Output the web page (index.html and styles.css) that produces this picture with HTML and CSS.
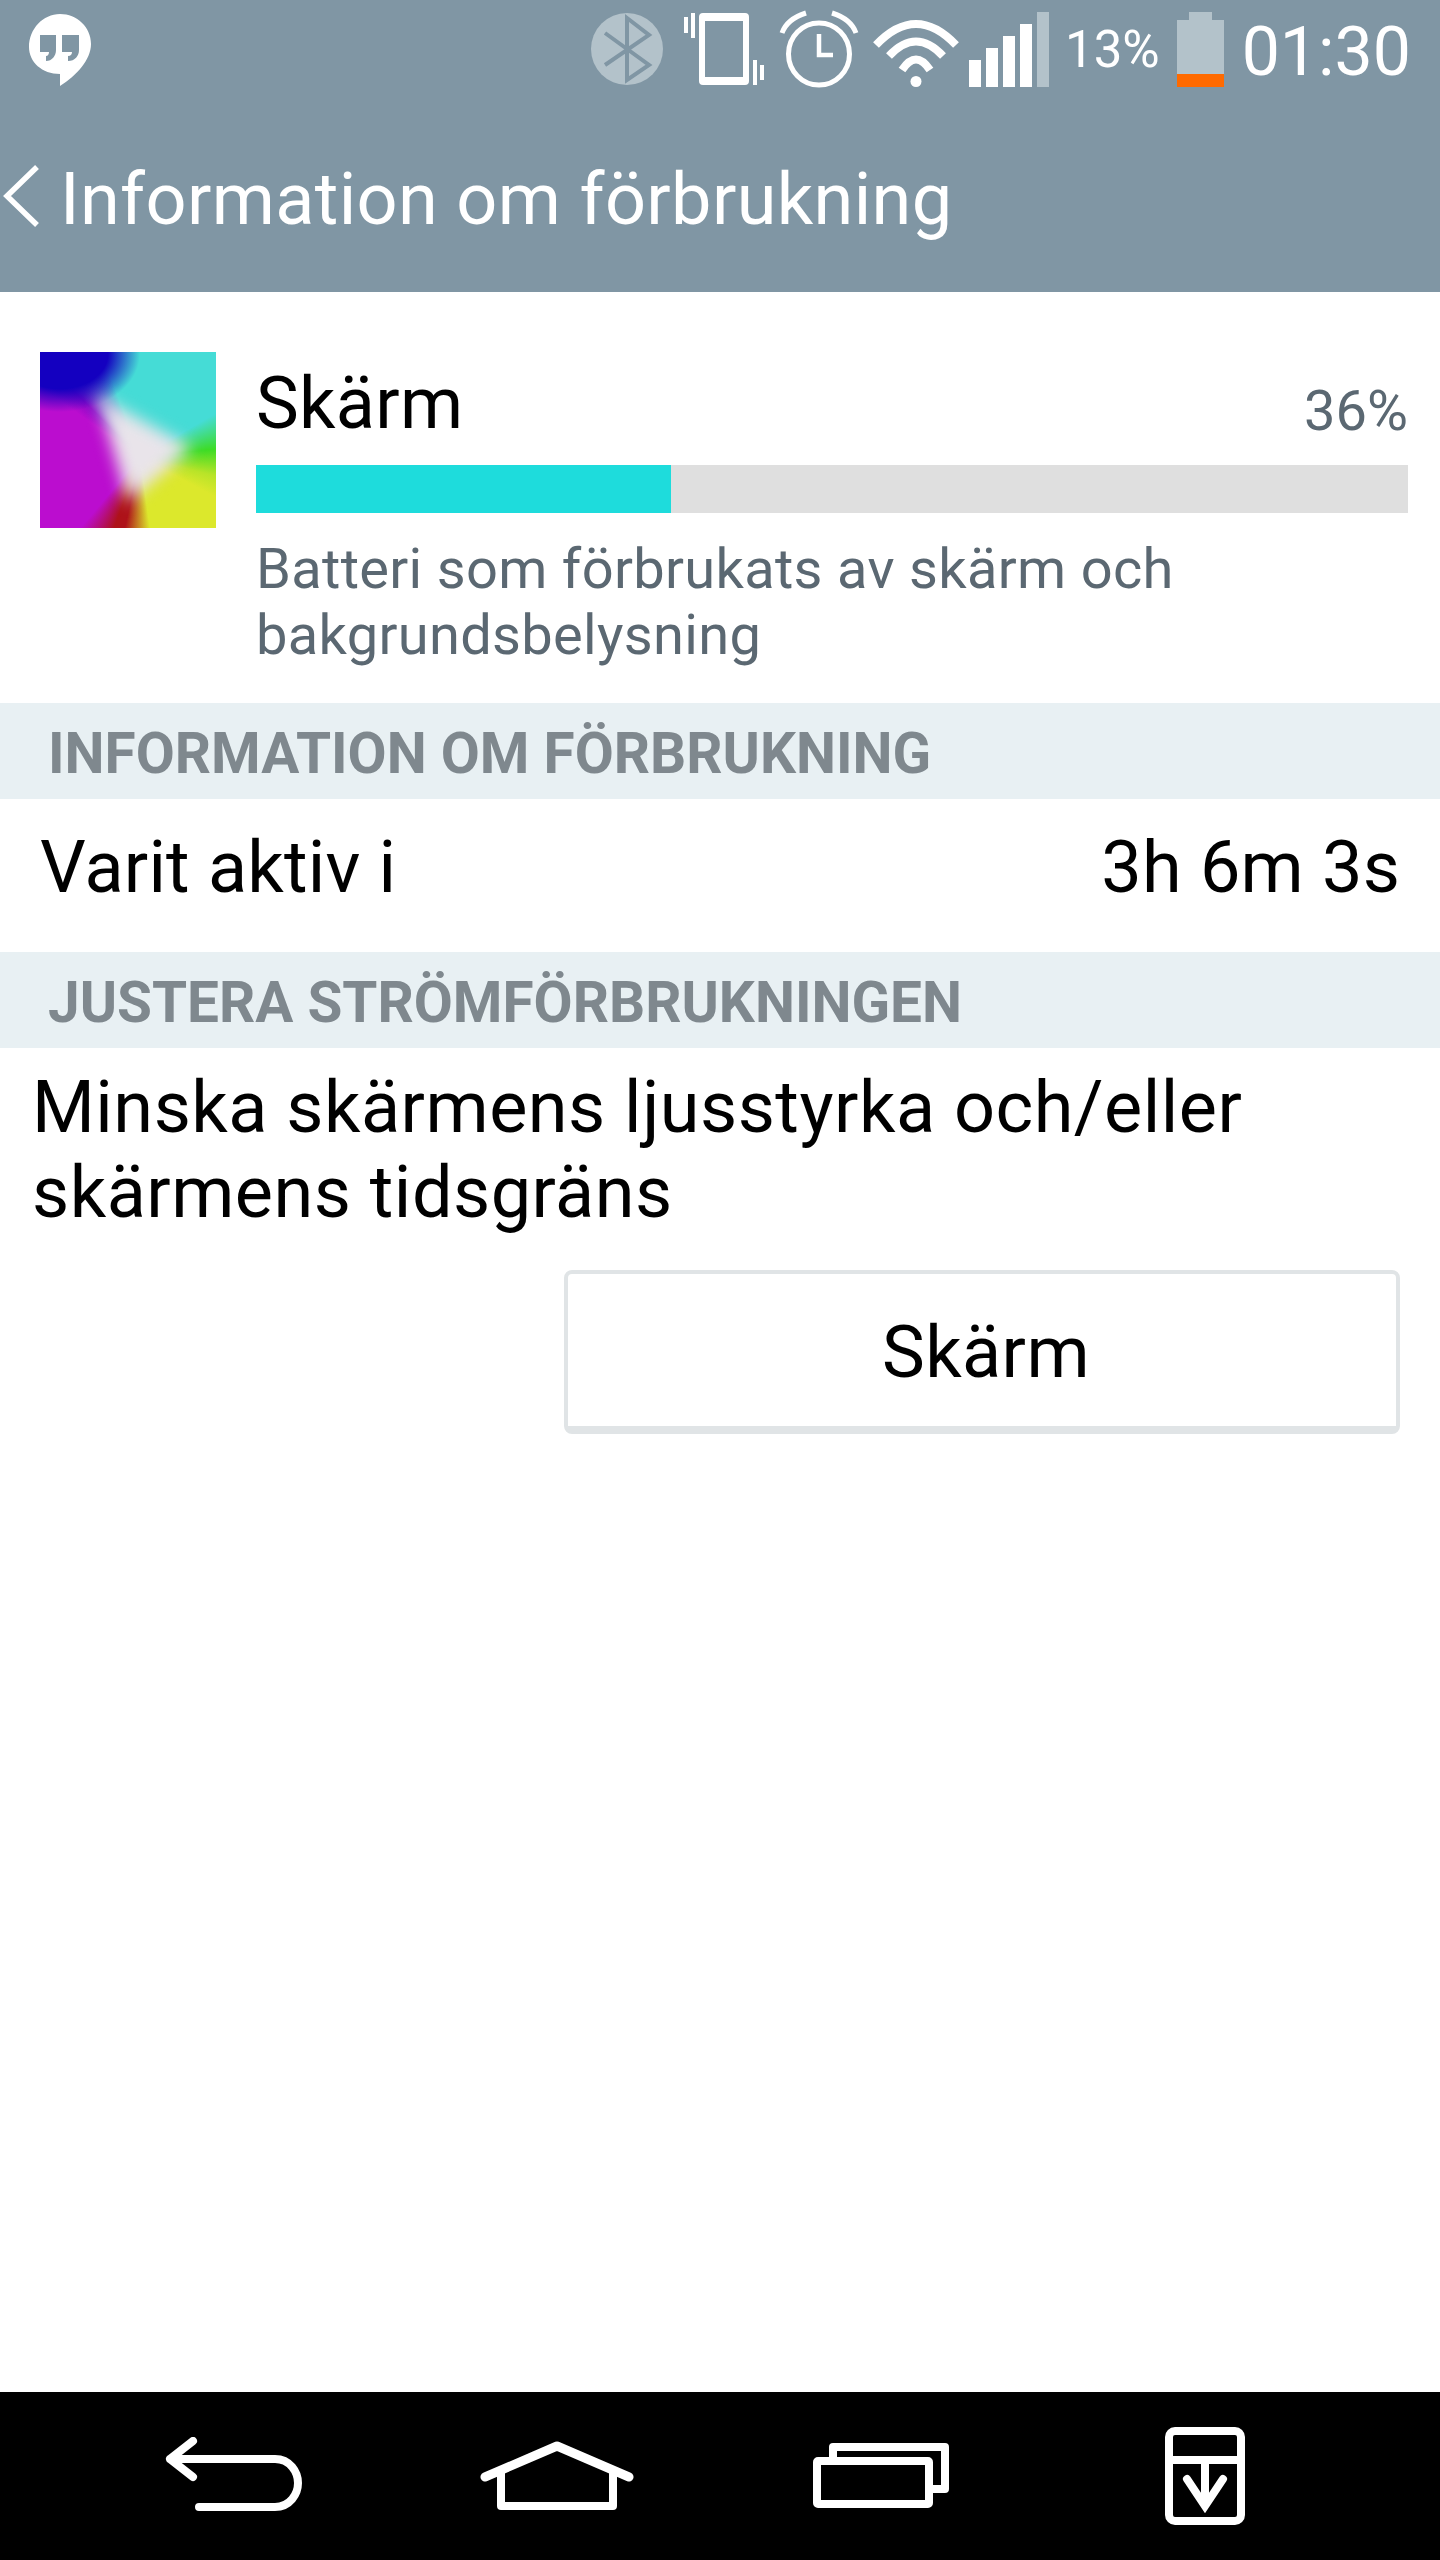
FILE: index.html
```html
<!DOCTYPE html>
<html lang="sv">
<head>
<meta charset="utf-8">
<title>Information om förbrukning</title>
<link rel="stylesheet" href="styles.css">
</head>
<body>
<div class="page">
  <header class="topbar">
    <div class="status">
      <svg class="ic" width="62" height="100" viewBox="29 0 62 100"><path class="w" d="M60 14C43 14 29 29 29 47C29 62 42 74 60 74V86C76 76 91 60 91 44C91 27 77 14 60 14Z"/><path class="bg" d="M40 35H56V50C56 56 52 61 46 61V56C48 56 49 54 49 52H40ZM62 35H79V50C79 56 75 61 68 61V56C71 56 72 54 72 52H62Z"/></svg>
      <div class="status-right">
        <svg class="ic" width="72" height="100" viewBox="591 0 72 100"><ellipse cx="627" cy="49" rx="36" ry="36" fill="#b3c2ca"/><path d="M605 33L649 65L627 80V18L649 35L605 65" fill="none" stroke="#8096a4" stroke-width="4"/></svg>
        <svg class="ic gap-vib" width="80" height="100" viewBox="684 0 80 100"><path class="w" fill-rule="evenodd" d="M703 13H745Q749 13 749 17V81Q749 85 745 85H703Q699 85 699 81V17Q699 13 703 13ZM705 21V77H743V21Z"/><path class="w" d="M684 17H688V33H684ZM691 13H695V38H691ZM753 60H757V85H753ZM760 65H764V80H760Z"/></svg>
        <svg class="ic gap-alarm" width="80" height="100" viewBox="779 0 80 100"><ellipse cx="819" cy="54" rx="30.500" ry="31" fill="none" stroke="#fff" stroke-width="5"/><path d="M819 34V55H833" fill="none" stroke="#fff" stroke-width="4.500"/><path d="M782 33Q787 19 806 13M856 33Q851 19 832 13" fill="none" stroke="#fff" stroke-width="5"/></svg>
        <svg class="ic gap-wifi" width="88" height="100" viewBox="872 0 88 100"><path d="M876 45Q916 3 956 45M889 56Q916 27 943 56M902 70Q916 49 930 70" fill="none" stroke="#fff" stroke-width="8"/><ellipse cx="916" cy="81.500" rx="5.500" ry="5.500" fill="#fff"/></svg>
        <svg class="ic gap-signal" width="80" height="100" viewBox="969 0 80 100"><path class="w" d="M969 60H981V87H969ZM986 48H998V87H986ZM1003 36H1015V87H1003ZM1020 24H1032V87H1020Z"/><rect x="1037" y="12" width="12" height="75" fill="#b3c2ca"/></svg>
        <span class="pct">13%</span>
        <svg class="ic" width="47" height="100" viewBox="1177 0 47 100"><path fill="#b3c2ca" d="M1189 12H1212V20H1224V74H1177V20H1189Z"/><rect x="1177" y="74" width="47" height="13" fill="#ff6a00"/></svg>
        <span class="clock">01:30</span>
      </div>
    </div>
    <div class="titlebar">
      <svg class="chev" width="36" height="62" viewBox="3 166 36 62"><path d="M37 168L7 197L37 226" fill="none" stroke="#fff" stroke-width="5.500"/></svg>
      <h1 class="title">Information om förbrukning</h1>
    </div>
  </header>

  <section class="usage">
    <div class="thumb"><div class="thumb-glow"><div class="thumb-tri"></div></div></div>
    <div class="usage-info">
      <div class="usage-head">
        <span class="usage-name">Skärm</span>
        <span class="usage-pct">36%</span>
      </div>
      <div class="bar"><div class="bar-fill"></div></div>
      <p class="usage-desc">Batteri som förbrukats av skärm och bakgrundsbelysning</p>
    </div>
  </section>

  <h2 class="section">INFORMATION OM FÖRBRUKNING</h2>
  <div class="row"><span>Varit aktiv i</span><span>3h 6m 3s</span></div>
  <h2 class="section">JUSTERA STRÖMFÖRBRUKNINGEN</h2>
  <p class="advice">Minska skärmens ljusstyrka och/eller skärmens tidsgräns</p>
  <div class="actions"><button class="btn" type="button">Skärm</button></div>

  <nav class="nav">
    <div class="nav-item"><svg width="137" height="78" viewBox="165 2437 137 78"><path d="M193 2441L170 2459L193 2477M170 2459H275C290 2459 298 2472 298 2483C298 2494 290 2507 275 2507H199" fill="none" stroke="#fff" stroke-width="8" stroke-linecap="round" stroke-linejoin="round"/></svg></div>
    <div class="nav-item"><svg width="154" height="70" viewBox="481 2441 154 70"><path d="M486 2477L558 2446L630 2477" fill="none" stroke="#fff" stroke-width="9" stroke-linecap="round" stroke-linejoin="round"/><path d="M502 2468V2506H614V2468" fill="none" stroke="#fff" stroke-width="8" stroke-linejoin="round"/></svg></div>
    <div class="nav-item"><svg width="136" height="66" viewBox="814 2444 136 66"><rect x="818" y="2462" width="112" height="43" rx="1" fill="none" stroke="#fff" stroke-width="8"/><path d="M834 2458V2448H946V2490H934" fill="none" stroke="#fff" stroke-width="8" stroke-linejoin="round"/></svg></div>
    <div class="nav-item"><svg width="80" height="98" viewBox="1166 2427 80 98"><rect x="1170" y="2431" width="72" height="90" rx="6" fill="none" stroke="#fff" stroke-width="8"/><path d="M1170 2460H1242M1206 2460V2502" fill="none" stroke="#fff" stroke-width="8"/><path d="M1188 2479L1206 2506L1224 2479" fill="none" stroke="#fff" stroke-width="8" stroke-linecap="round"/></svg></div>
  </nav>
</div>
</body>
</html>
```

FILE: styles.css
```css
* { box-sizing: border-box; }
html, body { margin: 0; padding: 0; }
body { background: #fff; font-family: Roboto, "Liberation Sans", sans-serif; color: #000; }
.page { width: 1440px; height: 2560px; display: flex; flex-direction: column; overflow: hidden; }

.topbar { height: 292px; background: #8096a4; color: #fff; flex: none; }
.status { height: 100px; display: flex; padding: 0 29px 0 29px; }
.ic { display: block; flex: none; }
.w { fill: #fff; }
.bg { fill: #8096a4; }
.status-right { margin-left: auto; display: flex; align-items: flex-start; }
.gap-vib { margin-left: 21px; }
.gap-alarm { margin-left: 15px; }
.gap-wifi { margin-left: 13px; }
.gap-signal { margin-left: 9px; }
.pct { width: 128px; padding-left: 16px; font-size: 51px; font-weight: 400; line-height: 100px; height: 100px; }
.clock { width: 187px; text-align: right; font-size: 68px; font-weight: 400; line-height: 100px; height: 100px; margin-top: 2px; }

.titlebar { height: 192px; display: flex; align-items: center; padding-left: 3px; }
.chev { flex: none; display: block; }
.title { margin: 8px 0 0 21px; font-size: 72px; font-weight: 400; line-height: 84px; letter-spacing: 0.37px; white-space: nowrap; }

.usage { height: 411px; display: flex; padding: 60px 32px 0 40px; flex: none; }
.thumb {
  flex: none;
  width: 176px;
  height: 176px;
  overflow: hidden;
  background:
    radial-gradient(ellipse 80px 58px at 20px 2px, #1400c0 60%, rgba(20,0,192,0) 100%),
    conic-gradient(from 0deg at 100px 105px, #45dcd6 0deg, #45dcd6 60deg, #3ddc25 84deg, #b8e428 104deg, #dce82c 118deg, #dce82c 172deg, #ae1219 192deg, #ae1219 200deg, #bb0dcf 220deg, #bb0dcf 305deg, #8a08c8 315deg, #45dcd6 340deg, #45dcd6 360deg);
}
.thumb-glow { width: 176px; height: 176px; filter: blur(8px); }
.thumb-tri { width: 176px; height: 176px; background: #e9e4ea; clip-path: polygon(58px 44px, 152px 96px, 88px 150px); }
.usage-info { flex: 1; margin: 10px 0 0 40px; }
.usage-head { display: flex; justify-content: space-between; align-items: baseline; line-height: 84px; }
.usage-name { font-size: 72px; font-weight: 400; letter-spacing: 0.3px; }
.usage-pct { position: relative; top: 2px; font-size: 56px; font-weight: 400; color: #5b6872; }
.bar { height: 48px; margin-top: 14px; background: #dfdfdf; }
.bar-fill { width: 415px; height: 100%; background: #1edcdc; }
.usage-desc { margin: 23px 0 0; padding-left: 0; font-size: 56px; line-height: 66px; font-weight: 400; letter-spacing: 0.32px; color: #5b6872; }

.section { margin: 0; height: 96px; flex: none; display: flex; align-items: center; padding: 4px 0 0 48px; background: #e8f0f3; color: #7f888e; font-size: 56.7px; font-weight: 700; }

.row { height: 153px; flex: none; display: flex; justify-content: space-between; align-items: center; padding: 0 40px 16px 40px; font-size: 72px; font-weight: 400; letter-spacing: 0.2px; }

.advice { margin: 0; padding: 17px 32px 0; font-size: 72px; line-height: 85px; font-weight: 400; letter-spacing: 0.5px; }
.actions { display: flex; justify-content: flex-end; padding: 35px 40px 0 0; }
.btn { width: 836px; height: 164px; padding: 4px 0 0 8px; background: #fff; border: 4px solid #e0e4e6; border-bottom-width: 8px; border-radius: 8px; font-family: inherit; font-size: 72px; letter-spacing: 0.4px; color: #000; }

.nav { margin-top: auto; height: 168px; flex: none; background: #000; display: grid; grid-template-columns: repeat(4, 324px); padding-left: 71px; }
.nav-item { display: flex; align-items: center; justify-content: center; }
.nav svg { display: block; }
```
